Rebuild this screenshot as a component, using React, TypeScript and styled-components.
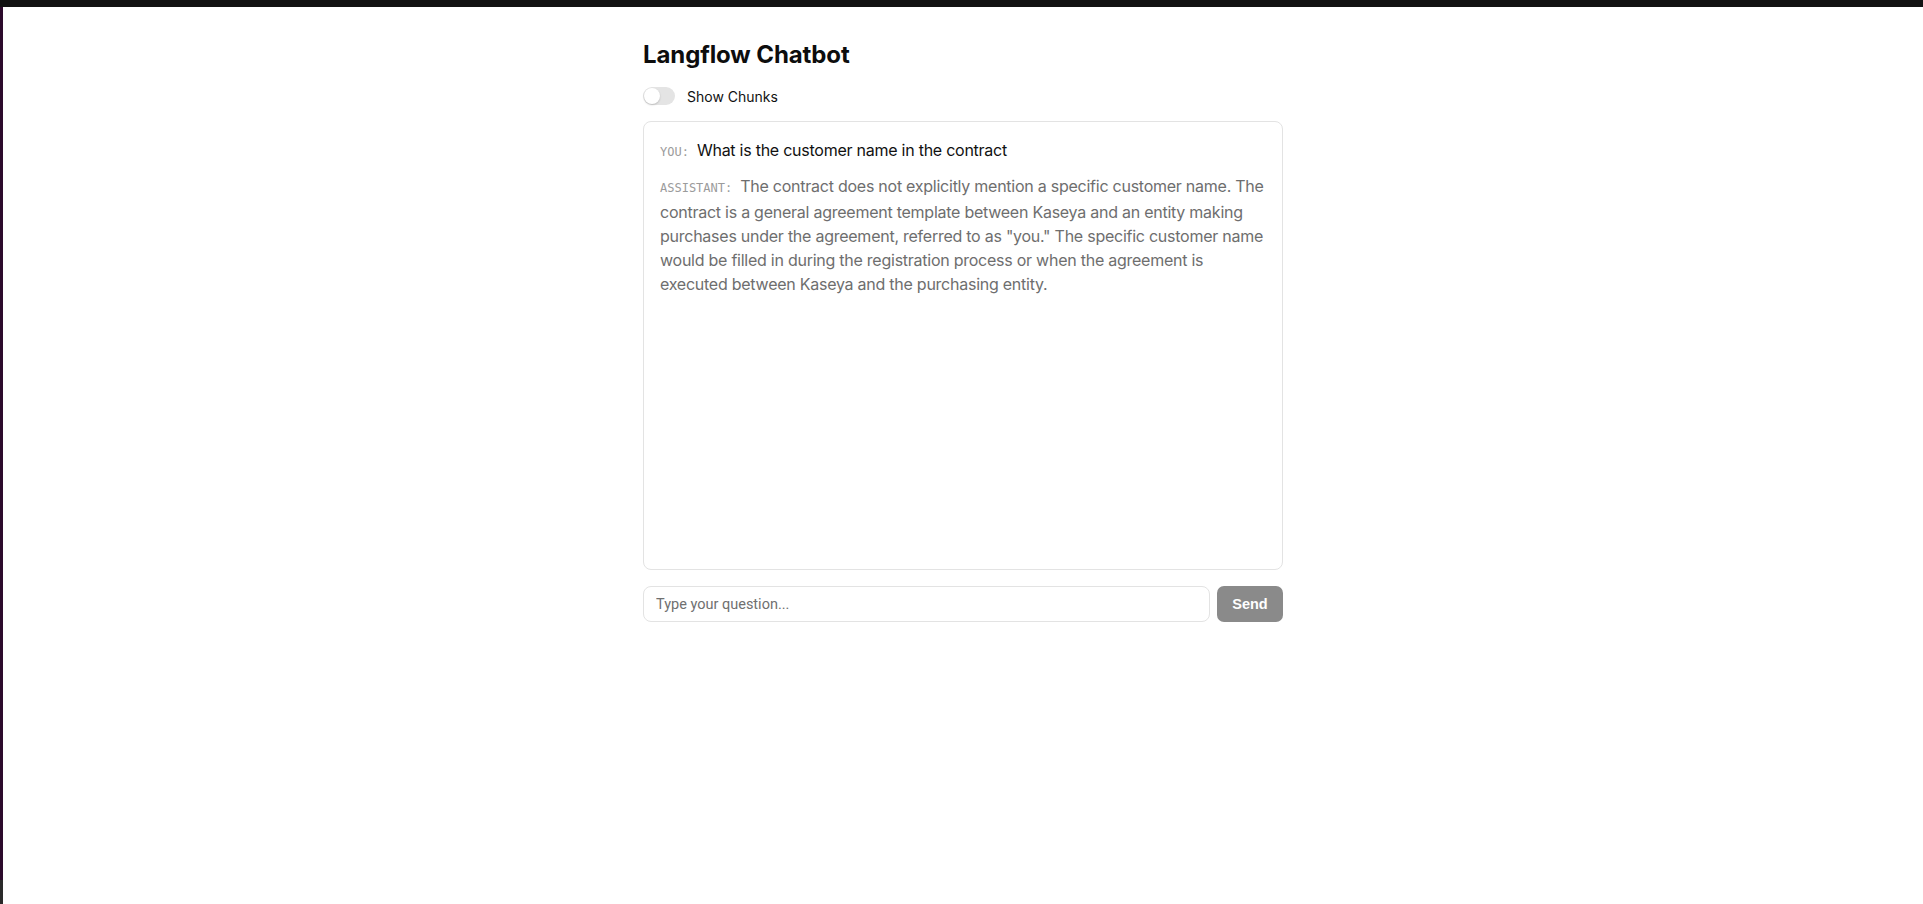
import React, { useState } from "react";
import styled, { createGlobalStyle } from "styled-components";

const GlobalStyle = createGlobalStyle`
  html, body { margin: 0; padding: 0; background: #ffffff; }
  body { font-family: Inter, "Noto Sans", sans-serif; color: #111111; }
  * { box-sizing: border-box; }
`;

const Page = styled.div`
  display: flex;
  flex-direction: column;
  height: 904px;
  overflow: hidden;
`;

const TopBar = styled.div`
  height: 7px;
  flex: none;
  background: #121212;
`;

const Body = styled.div`
  display: flex;
  flex: 1;
`;

const SideStrip = styled.div`
  width: 3px;
  flex: none;
  background: linear-gradient(to bottom, #2c0b2c 0, #2c0b2c 873px, #2a2a2a 873px);
`;

const Main = styled.main`
  flex: 1;
  display: flex;
  justify-content: center;
`;

const Column = styled.div`
  width: 640px;
  padding-top: 32px;
  display: flex;
  flex-direction: column;
`;

const Title = styled.h1`
  margin: 0;
  font-size: 24px;
  line-height: 32px;
  font-weight: 700;
  letter-spacing: -0.1px;
  color: #0d0d0d;
`;

const ToggleRow = styled.label`
  margin-top: 16px;
  display: flex;
  align-items: center;
  gap: 12px;
  height: 18px;
  font-size: 14px;
  color: #111111;
  cursor: pointer;
`;

const Track = styled.span<{ $on: boolean }>`
  position: relative;
  width: 32px;
  height: 18px;
  border-radius: 9px;
  background: ${(p) => (p.$on ? "#8a8a8a" : "#e4e4e4")};
  flex: none;
`;

const Knob = styled.span<{ $on: boolean }>`
  position: absolute;
  top: 1px;
  left: ${(p) => (p.$on ? "15px" : "1px")};
  width: 16px;
  height: 16px;
  border-radius: 50%;
  background: #ffffff;
  box-shadow: 0 1px 2px rgba(0, 0, 0, 0.18);
`;

const ChatCard = styled.section`
  margin-top: 16px;
  height: 449px;
  border: 1px solid #e3e3e3;
  border-radius: 8px;
  padding: 16px 16px;
  display: flex;
  flex-direction: column;
  gap: 10px;
  overflow-y: auto;
`;

const Message = styled.p<{ $role: "user" | "assistant" }>`
  margin: 0;
  font-size: 16px;
  line-height: 24px;
  letter-spacing: -0.25px;
  color: ${(p) => (p.$role === "user" ? "#111111" : "#6e6e6e")};
`;

const RoleLabel = styled.span`
  font-family: "DejaVu Sans Mono", "Liberation Mono", monospace;
  font-size: 12px;
  letter-spacing: 0;
  color: #9b9b9b;
  margin-right: 8px;
  text-transform: uppercase;
`;

const InputRow = styled.form`
  margin-top: 16px;
  display: flex;
  gap: 7px;
`;

const QuestionInput = styled.input`
  flex: 1;
  height: 36px;
  border: 1px solid #e3e3e3;
  border-radius: 8px;
  padding: 0 12px;
  font-family: Roboto, "Noto Sans", sans-serif;
  font-size: 14.5px;
  color: #111111;
  outline: none;
  &::placeholder { color: #707070; }
`;

const SendButton = styled.button`
  width: 66px;
  height: 36px;
  border: none;
  border-radius: 7px;
  background: #8a8a8a;
  color: #ffffff;
  font-family: "Liberation Sans", Arial, sans-serif;
  font-weight: 700;
  font-size: 14.5px;
  cursor: pointer;
`;

const messages: { role: "user" | "assistant"; text: string }[] = [
  { role: "user", text: "What is the customer name in the contract" },
  {
    role: "assistant",
    text:
      'The contract does not explicitly mention a specific customer name. The contract is a general agreement template between Kaseya and an entity making purchases under the agreement, referred to as "you." The specific customer name would be filled in during the registration process or when the agreement is executed between Kaseya and the purchasing entity.',
  },
];

export default function App() {
  const [showChunks, setShowChunks] = useState(false);
  const [question, setQuestion] = useState("");
  return (
    <>
      <GlobalStyle />
      <Page>
        <TopBar />
        <Body>
          <SideStrip />
          <Main>
            <Column>
              <Title>Langflow Chatbot</Title>
              <ToggleRow onClick={() => setShowChunks((v) => !v)}>
                <Track $on={showChunks}>
                  <Knob $on={showChunks} />
                </Track>
                Show Chunks
              </ToggleRow>
              <ChatCard>
                {messages.map((m, i) => (
                  <Message key={i} $role={m.role}>
                    <RoleLabel>{m.role === "user" ? "You:" : "Assistant:"}</RoleLabel>
                    {m.text}
                  </Message>
                ))}
              </ChatCard>
              <InputRow onSubmit={(e) => e.preventDefault()}>
                <QuestionInput
                  placeholder="Type your question..."
                  value={question}
                  onChange={(e) => setQuestion(e.target.value)}
                />
                <SendButton type="submit">Send</SendButton>
              </InputRow>
            </Column>
          </Main>
        </Body>
      </Page>
    </>
  );
}
